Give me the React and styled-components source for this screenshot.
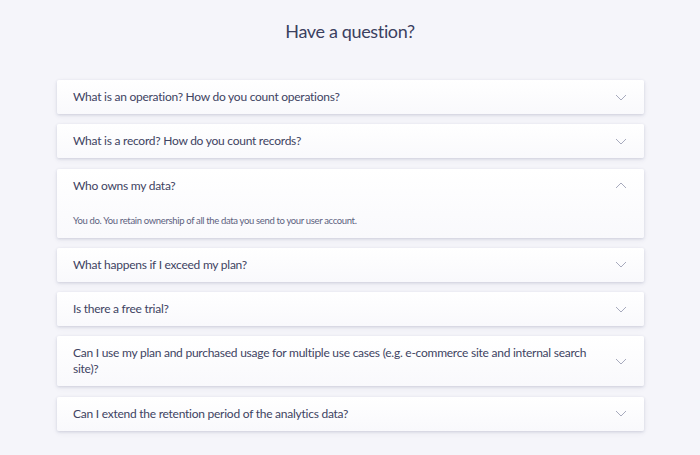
import styled, { createGlobalStyle } from "styled-components"

const GlobalStyle = createGlobalStyle`
  body {
    margin: 0;
    background: #f5f5fa;
    font-family: Lato, "Open Sans", sans-serif;
  }
`

const faqs = [
  { q: "What is an operation? How do you count operations?" },
  { q: "What is a record? How do you count records?" },
  {
    q: "Who owns my data?",
    a: "You do. You retain ownership of all the data you send to your user account.",
    open: true,
  },
  { q: "What happens if I exceed my plan?" },
  { q: "Is there a free trial?" },
  {
    q: "Can I use my plan and purchased usage for multiple use cases (e.g. e-commerce site and internal search site)?",
  },
  { q: "Can I extend the retention period of the analytics data?" },
]

function Chevron({ up }) {
  return (
    <Styled.Icon width="12" height="7" viewBox="0 0 12 7" $up={up}>
      <path d="M1 1l5 5 5-5" fill="none" stroke="#a7aabd" strokeWidth="1" />
    </Styled.Icon>
  )
}

export default function App() {
  return (
    <Styled.Page>
      <GlobalStyle />
      <Styled.Title>Have a question?</Styled.Title>
      <Styled.List>
        {faqs.map((item) => (
          <Styled.Card key={item.q}>
            <Styled.Head>
              <Styled.Question>{item.q}</Styled.Question>
              <Chevron up={item.open} />
            </Styled.Head>
            {item.open && <Styled.Answer>{item.a}</Styled.Answer>}
          </Styled.Card>
        ))}
      </Styled.List>
    </Styled.Page>
  )
}

const Styled = {
  Page: styled.div`
    width: 700px;
    height: 455px;
    padding-top: 19px;
    box-sizing: border-box;
  `,
  Title: styled.h2`
    margin: 0;
    text-align: center;
    font-size: 18px;
    font-weight: 400;
    letter-spacing: -0.35px;
    line-height: 24px;
    color: #3b4060;
  `,
  List: styled.div`
    display: flex;
    flex-direction: column;
    gap: 10.3px;
    width: 587px;
    margin: 37px 0 0 57px;
  `,
  Card: styled.div`
    background: linear-gradient(180deg, #ffffff 0%, #f9f9fc 100%);
    border-radius: 2px;
    box-shadow: 0 1px 3px rgba(60, 64, 110, 0.18), 0 2px 6px rgba(60, 64, 110, 0.06);
  `,
  Head: styled.div`
    display: flex;
    align-items: center;
    justify-content: space-between;
    min-height: 34px;
    padding: 9px 17px 9px 16px;
    box-sizing: border-box;
  `,
  Question: styled.div`
    max-width: 530px;
    font-size: 12px;
    letter-spacing: -0.25px;
    line-height: 16px;
    color: #3e4362;
  `,
  Icon: styled.svg`
    flex-shrink: 0;
    transform: ${(p) => (p.$up ? "rotate(180deg)" : "none")};
  `,
  Answer: styled.div`
    padding: 10px 16px 9px;
    font-size: 9.5px;
    letter-spacing: -0.35px;
    line-height: 16px;
    color: #5d6280;
  `,
}
